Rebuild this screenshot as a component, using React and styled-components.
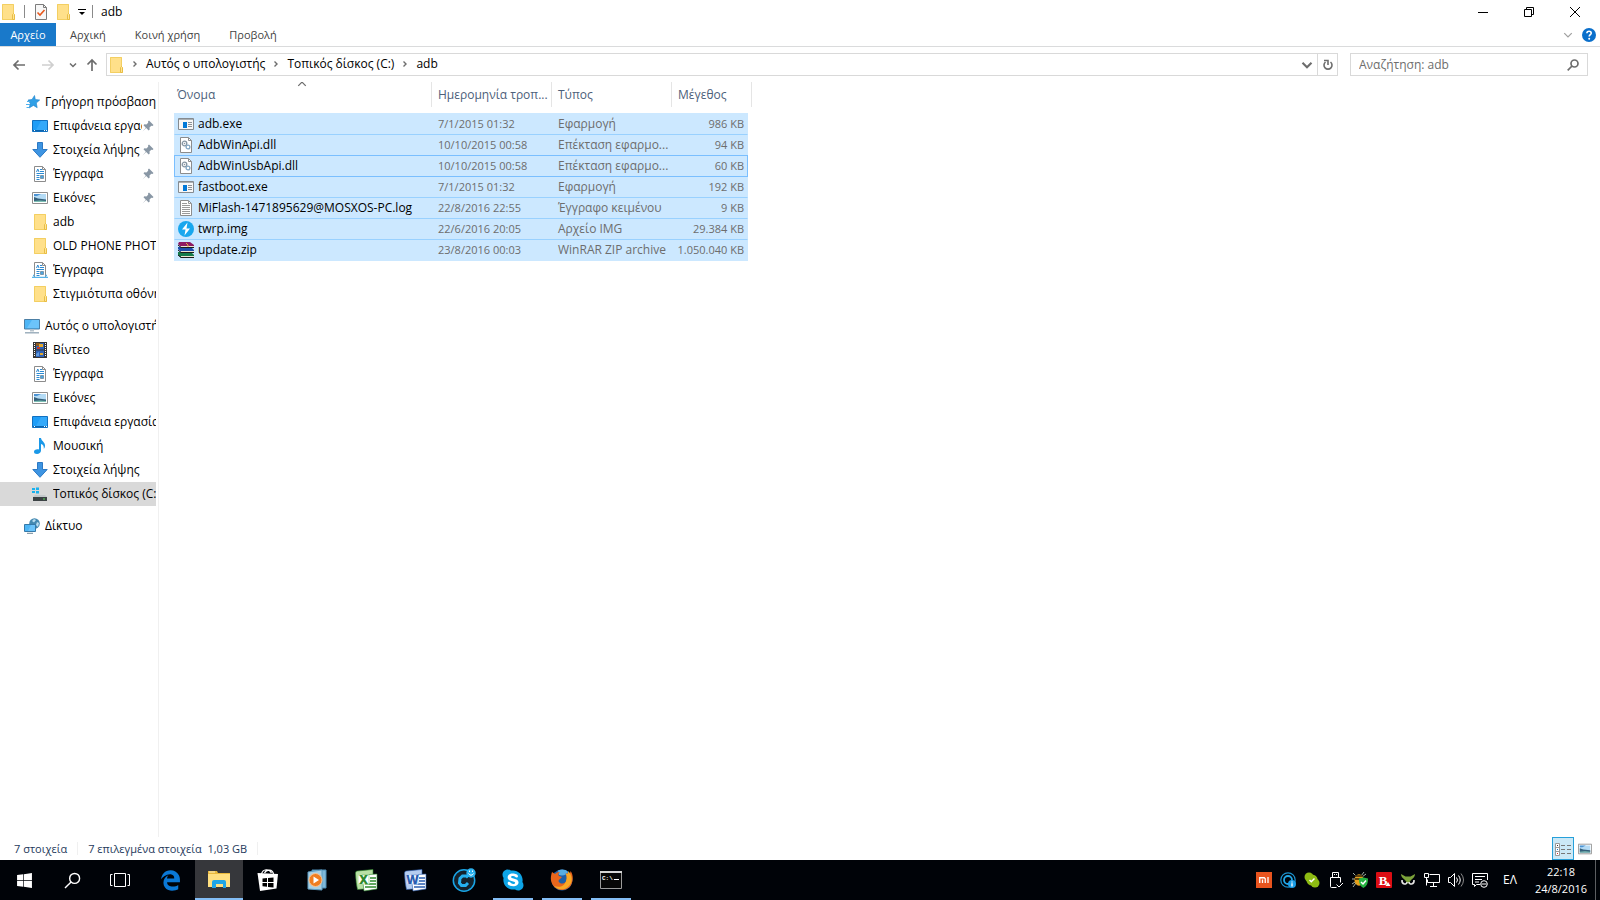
import React from "react";
import styled, { createGlobalStyle, css } from "styled-components";
import { FaEdgeLegacy, FaSkype, FaWindows } from "react-icons/fa";

const GlobalStyle = createGlobalStyle`
  * {
    box-sizing: border-box;
  }
  body {
    margin: 0;
    background: #fff;
    color: #000;
    font-family: "Open Sans", "Noto Sans", sans-serif;
    font-size: 12px;
    line-height: 16px;
  }
  button, input {
    font: inherit;
    color: inherit;
    border: 0;
    padding: 0;
    background: none;
  }
  a {
    color: inherit;
    text-decoration: none;
  }
  svg {
    display: block;
    flex: none;
  }
`;

/* ---------- icons ---------- */

const Icon = ({ size = 16, box = 16, children }) => (
  <svg width={size} height={size} viewBox={`0 0 ${box} ${box}`} fill="none" aria-hidden="true">
    {children}
  </svg>
);

const FolderIcon = () => (
  <Icon>
    <path d="M2 0h12v10l1 1v5H2z" fill="#ffe08a" />
    <path d="M2.500.5h11v15h-11z" stroke="#f3cf62" />
    <path d="M12.500 10.500l1-1 1 1v5h-2z" fill="#ffe596" stroke="#e8bd45" />
  </Icon>
);

const StarIcon = () => (
  <Icon>
    <path d="M10.500 1.500l.8 4 4.400.5-3.400 3 .9 4.700-3.800-2.300-4.200 2.600 1.100-4.500L4 6l4-.5z" fill="#2f9fe6" stroke="#1f82cb" strokeWidth=".6" />
    <path d="M3 7.500h3M2 10.500h4M2.500 13.500h3" stroke="#4fb0ec" />
  </Icon>
);

const DesktopIcon = () => (
  <Icon>
    <path d="M.5 2.500h15v11H.5z" fill="#1e9df7" stroke="#1170c0" />
    <path d="M9 3h6v9L4 12z" fill="#34a9fa" />
    <path d="M1 12.500h14" stroke="#0b64ae" />
    <path d="M2 12.500h1M12 12.500h1M14 12.500h1" stroke="#fff" />
  </Icon>
);

const DownloadIcon = () => (
  <Icon>
    <path d="M5.500.5h5v7h4.700L8 15.300.8 7.500h4.700z" fill="#3d94e2" stroke="#2c79c4" />
  </Icon>
);

const DocumentsIcon = ({ library }) => (
  <Icon>
    <path d="M2.500.5h8l3 3v12h-11z" fill="#fff" stroke="#8c8c8c" />
    <path d="M10.500.5v3h3" stroke="#8c8c8c" />
    <path d="M4.500 6l1.300-3L7 6M8 3.500h2M8 5.500h4M4.500 7.500H12M4.500 9.500h3M4.500 11.500h3M4.500 13.500h3" stroke="#2c8ad2" />
    <path d="M8.500 9.500h3v3h-3z" fill="#4aa3df" stroke="#7a98ad" />
    {library && <path d="M0 15.500h16M1 13.500h1.500M13.500 13.500H15" stroke="#57b4ea" strokeWidth="1.500" />}
  </Icon>
);

const PicturesIcon = ({ size = 16 }) => (
  <Icon size={size}>
    <path d="M.5 2.500h15v11H.5z" fill="#fff" stroke="#8f8f8f" />
    <path d="M2 4h12v8H2z" fill="#b4dbf5" />
    <path d="M2 4h7L5 6H2z" fill="#4c93d4" />
    <path d="M2 7l4 1.500 8 1V12H2z" fill="#35607b" />
    <path d="M2 11l6-.5 6 .5v1H2z" fill="#7ec0b4" />
  </Icon>
);

const PinIcon = () => (
  <Icon size={12} box={12}>
    <path d="M7 .5L11.500 5l-1 1-1.200-.2L7.500 7.600l.2 2-1 .9-2.500-2.400L.5 11.500l3.300-3.800L1.500 5.300l.9-1 2 .2 1.800-1.800L6 1.500z" fill="#8997a5" />
  </Icon>
);

const MonitorIcon = () => (
  <Icon>
    <path d="M.5 1.500h15v9.500H.5z" fill="#4db5f5" stroke="#4c7fa5" />
    <path d="M8 2h7v8L3 10z" fill="#6cc4fa" />
    <path d="M6 11.500h4v2H6z" fill="#b8c4cd" />
    <path d="M1 14.800h14" stroke="#8fa4b4" strokeWidth="1.300" />
  </Icon>
);

const VideoIcon = () => (
  <Icon>
    <path d="M1 0h14v16H1z" fill="#353535" />
    <path d="M2.500 1v14M13.500 1v14" stroke="#fff" strokeDasharray="1 1" />
    <path d="M4 1h8v6.500H4zM4 8.500h8V15H4z" fill="#2d62b8" />
    <path d="M4 1h4v3H4z" fill="#8e5a20" />
    <path d="M7 2h4v3H7zM8 11h3v2H8z" fill="#e4a82b" />
    <path d="M5 5h3v2H5z" fill="#c0392b" />
    <path d="M4 12l3-2v4H4z" fill="#5f9be0" />
  </Icon>
);

const MusicIcon = () => (
  <Icon>
    <path d="M7 0h2c.3 3 4 4 4 7.500 0 1.500-.5 2.500-1.200 3.300.4-2.800-.9-4.300-2.800-4.800v6.500C9 14.500 7 16 5 16s-3-1-3-2.300C2 12 4 11 7 11.500z" fill="#1a98e8" />
  </Icon>
);

const DriveIcon = () => (
  <Icon>
    <path d="M0 2h3v2H0zM4 1.500h3V4H4zM0 5h3v2H0zM4 5h3v2.500H4z" fill="#19b1ee" />
    <path d="M3 9h10l2 2H1z" fill="#c3c8cb" />
    <path d="M1 11h14v4H1z" fill="#3c4245" />
    <path d="M11 13h2" stroke="#59dc5b" />
  </Icon>
);

const NetworkIcon = () => (
  <Icon>
    <circle cx="10.500" cy="5.500" r="5.300" fill="#4489b0" />
    <path d="M8 3l2-2 2 1-2 2.500zM13 4l2 1-1 4-2-2z" fill="#b8dcef" />
    <path d="M.5 6.500h11v7H.5z" fill="#4db5f5" stroke="#3679a8" />
    <path d="M7 7h4v6H4z" fill="#6cc4fa" />
    <path d="M3 15.300h6" stroke="#6f8798" />
  </Icon>
);

const ExeIcon = () => (
  <Icon>
    <path d="M.5 2.500h15v11H.5z" fill="#f7f7f7" stroke="#858b90" />
    <path d="M1 3.500h14" stroke="#a9afb3" />
    <path d="M5 6h4v6H5z" fill="#0078d7" />
    <path d="M10 6.500h4M10 8.500h4M10 10.500h4" stroke="#8b9196" />
  </Icon>
);

const DllIcon = () => (
  <Icon>
    <path d="M2.500.5h8l3 3v12h-11z" fill="#fff" stroke="#8c8c8c" />
    <path d="M10.500.5v3h3" stroke="#8c8c8c" />
    <circle cx="6.500" cy="6.500" r="2.300" stroke="#8796a3" strokeWidth="1.300" />
    <circle cx="6.500" cy="6.500" r=".8" fill="#8796a3" />
    <circle cx="10" cy="10" r="1.900" stroke="#85a8c4" strokeWidth="1.300" />
  </Icon>
);

const LogIcon = () => (
  <Icon>
    <path d="M2.500.5h8l3 3v12h-11z" fill="#fff" stroke="#8c8c8c" />
    <path d="M10.500.5v3h3M4 3.500h5M4 5.500h8M4 7.500h8M4 9.500h8M4 11.500h8M4 13.500h8" stroke="#9a9a9a" />
  </Icon>
);

const BoltIcon = () => (
  <Icon>
    <circle cx="8" cy="8" r="8" fill="#19a7ee" />
    <path d="M9.500 1.500L4 8.500h3.500L6.500 14.500l5.500-7H8.500z" fill="#fff" />
  </Icon>
);

const RarIcon = () => (
  <Icon>
    <path d="M1 0h11l4 3v2H3L0 2z" fill="#8e1a62" />
    <path d="M0 5h13l3 3v2H3L0 7z" fill="#1d4fae" />
    <path d="M0 10h13l3 3v3H3l-3-3z" fill="#127a4a" />
    <path d="M3 4.500h13M3 9.500h13M3 14.500h13" stroke="#e9e3d2" />
    <path d="M0 3l3 2.500h13M0 8l3 2.500h13M0 13l3 2.500h13" stroke="#1b1b1b" />
    <path d="M8 1l2 2v2" stroke="#e0b040" />
  </Icon>
);

const PropertiesIcon = () => (
  <Icon>
    <path d="M2.500.5h8l3 3v12h-11z" fill="#f7f7f7" stroke="#7c7c7c" />
    <path d="M10.500.5v3h3" stroke="#7c7c7c" />
    <path d="M4.500 8.500L7 11l4.500-5" stroke="#e8581c" strokeWidth="1.600" />
  </Icon>
);

const ArrowIcon = ({ turn = 0 }) => (
  <Icon>
    <path
      d="M14 8H3M7.500 3.500L3 8l4.500 4.500"
      stroke="currentColor"
      strokeWidth="1.700"
      transform={`rotate(${turn} 8 8)`}
    />
  </Icon>
);

const ChevronIcon = ({ size = 8, turn = 0, weight = 1 }) => (
  <Icon size={size} box={8}>
    <path d="M1 2.500l3 3 3-3" stroke="currentColor" strokeWidth={weight} transform={`rotate(${turn} 4 4)`} />
  </Icon>
);

const CrumbArrow = () => (
  <Icon size={8} box={8}>
    <path d="M2.500 1.500L5 4 2.500 6.500" stroke="currentColor" strokeWidth="1.400" />
  </Icon>
);

const RefreshIcon = () => (
  <Icon size={12} box={12}>
    <path d="M3.500 3a4 4 0 1 0 5 0" stroke="currentColor" strokeWidth="1.600" />
    <path d="M2 1.500h4V6" stroke="currentColor" strokeWidth="1.600" />
  </Icon>
);

const LensIcon = ({ size = 12, weight = 2 }) => (
  <Icon size={size} box={12}>
    <circle cx="7.500" cy="4.500" r="3.500" stroke="currentColor" strokeWidth={weight} />
    <path d="M5 7L.7 11.300" stroke="currentColor" strokeWidth={weight} />
  </Icon>
);

const HelpIcon = () => (
  <Icon size={14} box={14}>
    <circle cx="7" cy="7" r="7" fill="#0a6fcb" />
    <path d="M4.900 5.200c0-2.700 4.300-2.600 4.300 0 0 1.500-2 1.600-2 3.400" stroke="#fff" strokeWidth="1.600" />
    <circle cx="7.200" cy="10.800" r="1" fill="#fff" />
  </Icon>
);

const DetailsIcon = () => (
  <Icon>
    <path d="M.5 2.500h4v12h-4zM.5 6.500h4M.5 10.500h4" fill="#fff" stroke="#9a9a9a" />
    <path d="M2 4.500h1" stroke="#333" />
    <path d="M2 8.500h1" stroke="#1979ca" />
    <path d="M2 12.500h1" stroke="#d03030" />
    <path d="M6 4.500h4M12 4.500h4M6 8.500h4M12 8.500h4M6 12.500h4M12 12.500h4" stroke="#777" />
  </Icon>
);

const MinimizeIcon = () => (
  <Icon size={10} box={10}>
    <path d="M0 5.500h10" stroke="#000" />
  </Icon>
);

const RestoreIcon = () => (
  <Icon size={10} box={10}>
    <path d="M.5 2.500h7v7h-7zM2.500 2.500v-2h7v7h-2" stroke="#000" />
  </Icon>
);

const CloseIcon = () => (
  <Icon size={10} box={10}>
    <path d="M0 0l10 10M10 0L0 10" stroke="#000" />
  </Icon>
);

/* taskbar drawings */

const TaskViewIcon = () => (
  <Icon size={20} box={20}>
    <path d="M4.500 3.500h11v13h-11zM2.500 4.500h-2v11h2M17.500 4.500h2v11h-2" stroke="#fff" />
  </Icon>
);

const ExplorerIcon = () => (
  <Icon size={24} box={24}>
    <path d="M1 3h9l1 2h12v14H1z" fill="#e9b83c" />
    <path d="M2 4h6" stroke="#fff3c4" />
    <path d="M1 6h22v13H1z" fill="#ffdf80" />
    <path d="M5 20v-6q0-2 2-2h10q2 0 2 2v6h-3v-4H9v4z" fill="#1fa5e6" />
  </Icon>
);

const StoreIcon = () => (
  <Icon size={24} box={24}>
    <path d="M5.500 6C7 .5 13 .5 15.500 5M8.500 5c2-4 8-4 9 1" stroke="#fff" strokeWidth="1.200" />
    <path d="M1.500 5L22 6l-1.500 14.500L4 23z" fill="#fff" />
    <path d="M6.500 10.500l4.500-.5V14H6.500zM12 9.900l5.500-.5V14H12zM6.500 15H11v3.800l-4.500-.5zM12 15h5.500v4.500l-5.500-.6z" fill="#000" />
  </Icon>
);

const PlayerIcon = () => (
  <Icon size={24} box={24}>
    <path d="M7 2h14v18H7z" fill="#7fb8d9" stroke="#4c8db5" />
    <path d="M3 4l14-2v20L3 21z" fill="#a8cfe4" stroke="#5d9cc2" />
    <circle cx="10.500" cy="12" r="6.500" fill="#f07d20" stroke="#f9c493" />
    <path d="M8.500 8.500l5.500 3.500-5.500 3.500z" fill="#fff" />
  </Icon>
);

const OfficeIcon = ({ letter, color, light }) => (
  <Icon size={24} box={24}>
    <path d="M1.500 5q0-2 2-2L19 1.500v15l-3 4-12.500 1q-1.500-6-2-16.500z" fill={light} stroke={color} strokeWidth=".6" />
    <path d="M8 7l15-1v15l-13 2z" fill="#fff" stroke={color} strokeWidth=".6" />
    <path d="M16 10h6M16 13h6M11 16h11M11 19h11" stroke={color} strokeWidth="1.500" />
    <path d="M4 7h11v9H4z" fill="#fff" stroke={light} />
    <text x="9.500" y="15.500" fill={color} fontSize="12" fontWeight="800" textAnchor="middle">
      {letter}
    </text>
  </Icon>
);

const CIcon = () => (
  <Icon size={24} box={24}>
    <circle cx="12" cy="12.500" r="10.700" fill="#14222c" stroke="#19a5e6" strokeWidth="1.500" />
    <path d="M16 9.500l-1.500-1.500h-4l-2.500 2.500-.5 4.500 2 2.500h4l2.500-2.500" stroke="#25b0ef" strokeWidth="3" />
    <circle cx="19" cy="5" r="4.700" fill="#2bb2ef" />
    <path d="M16.500 5.500q2.500 3.500 5 0M17.500 2.500v1.500M20.500 2.500v1.500" stroke="#fff" />
  </Icon>
);

const FirefoxIcon = () => (
  <Icon size={24} box={24}>
    <circle cx="12" cy="12" r="10.500" fill="#1d5fa8" />
    <path d="M8 2.500C11 .8 16 1 18 4c-1 3-5 4-9 3z" fill="#57aee3" />
    <path d="M2 4l3 2c2-2 4-2 5-2-2 1.500-2 3-1 4l3 1-2 2c-2 1-2 3 0 4 3 1.500 6 0 6.500-3 1-2 0-5-1-7 4 2 5 0 5-2 3 4 3 10 0 15-4 5-12 5-16 1S0 10 2 4z" fill="#e8661c" />
    <path d="M18 3c5 5 5 12 0 16-4 3.500-10 3-14-1 4 1.500 8 1 10.500-2 2.500-3.500 2.500-7 1.500-10 1.500.5 2.500-1 2-3z" fill="#f9a825" />
  </Icon>
);

const ConsoleIcon = () => (
  <Icon size={24} box={24}>
    <path d="M1.500 3.500h21v17h-21z" fill="#070707" stroke="#9b9b9b" />
    <path d="M1 4h22" stroke="#d5d5d5" strokeWidth="2" />
    <text x="3" y="12" fill="#fff" fontSize="6" fontFamily="Liberation Mono, monospace" fontWeight="700">
      C:\.
    </text>
    <path d="M15 11.500h5" stroke="#fff" />
  </Icon>
);

const MiIcon = () => (
  <Icon>
    <path d="M0 0h16v16H0z" fill="#e8541e" />
    <path d="M3.750 11V5.750h4.500L9.250 6.750V11M6.500 7.500V11M12 5v6" stroke="#fff" strokeWidth="1.300" />
  </Icon>
);

const SyncIcon = () => (
  <Icon>
    <circle cx="8" cy="8" r="7.200" stroke="#1b93cf" strokeWidth="1.200" />
    <circle cx="8" cy="8" r="4" stroke="#22a6e5" strokeWidth="1.800" />
    <circle cx="12" cy="12" r="4" fill="#1a9de6" />
    <path d="M12 9.500v1M12 11.300v3.200" stroke="#fff" strokeWidth="1.300" />
  </Icon>
);

const ContactIcon = () => (
  <Icon>
    <circle cx="5" cy="5" r="4.500" fill="#8dbb13" />
    <circle cx="11" cy="11" r="4.500" fill="#8dbb13" />
    <circle cx="8" cy="8" r="5.600" fill="#8dbb13" />
    <path d="M5.500 8l1.800 1.800L10.500 6.500" stroke="#fff" strokeWidth="1.400" />
  </Icon>
);

const UsbIcon = () => (
  <Icon>
    <path d="M4.500.5h6v5h-6zM2.500 5.500h10v5M2.500 5.500v9q0 1 1 1h5" stroke="#fff" />
    <path d="M6 2.500h1M8 2.500h1" stroke="#fff" />
    <path d="M8.500 12.500l2.500 2.500 4-4" stroke="#fff" />
  </Icon>
);

const BugIcon = () => (
  <Icon>
    <path d="M1 1l3 3M12 0L9 4M0 7h3M0 12l3-2M14 2l-4 3M1 15l3-4" stroke="#a4b3a6" />
    <ellipse cx="7" cy="8" rx="4.500" ry="5.800" fill="#e6a01c" />
    <path d="M3 4h8M3 7h7" stroke="#332508" strokeWidth="1.500" />
    <path d="M7 6.500l4.500-1 4.500 1c0 5-1 7-4.500 9.500-3.500-2-4.500-4.500-4.500-9.500z" fill="#25b342" />
    <path d="M9 10l2 2 3-3.500" stroke="#fff" strokeWidth="1.500" />
  </Icon>
);

const ShieldIcon = () => (
  <Icon>
    <rect width="16" height="16" rx="1" fill="#dc0d13" />
    <text x="7" y="12.500" fill="#fff" fontSize="13" fontWeight="700" fontFamily="Liberation Serif, serif" textAnchor="middle">
      B
    </text>
    <path d="M9.500 14l2.500-4 2.500 4z" fill="#fff" />
  </Icon>
);

const OwlIcon = () => (
  <Icon>
    <path d="M1 2l4.500 2.500h5L15 2c0 3-2 4.500-4 6l-3 4-3-4C3 6.500 1 5 1 2z" fill="#7ba33a" />
    <path d="M2 8c-.5 5 5 5 5 2M14 8c.5 5-5 5-5 2" stroke="#e4e4e4" strokeWidth="1.600" />
  </Icon>
);

const LanIcon = () => (
  <Icon>
    <path d="M5.500 2.500h10v8h-12v-3M9.500 10.500v4M6 14.500h7" stroke="#fff" />
    <path d="M.5 1.500h4v4h-4zM2.500 5.500v8" stroke="#fff" />
  </Icon>
);

const VolumeIcon = () => (
  <Icon>
    <path d="M.5 5.500h2l4-4v13l-4-4h-2z" stroke="#fff" />
    <path d="M8.500 5.500q2 2.500 0 5M10.500 3.500q3.500 4.500 0 9" stroke="#fff" />
    <path d="M13 1.500q5 6.500 0 13" stroke="#8a8a8a" />
  </Icon>
);

const ActionIcon = () => (
  <Icon>
    <path d="M8 12.500H4.500L2.500 14.500v-2h-2v-11h15V8M3 4.500h10M3 7.500h7M3 10h4" stroke="#fff" />
    <circle cx="12" cy="12" r="3.300" stroke="#fff" />
    <path d="M9.500 12h5" stroke="#fff" />
  </Icon>
);

/* ---------- layout ---------- */

const Screen = styled.div`
  display: flex;
  flex-direction: column;
  height: 100vh;
`;

const TitleBar = styled.header`
  display: flex;
  align-items: center;
  height: 23px;
  padding-right: 2px;
`;

const QuickAccess = styled.div`
  display: flex;
  align-items: center;
  gap: 6px;
`;

const IconButton = styled.button`
  display: flex;
  align-items: center;
  justify-content: center;
  width: ${(props) => props.$width || 16}px;
  height: 20px;
  color: ${(props) => props.$color || "#6d6d6d"};
`;

const Divider = styled.span`
  width: 1px;
  height: 13px;
  margin: 0 ${(props) => props.$gap || 0}px;
  background: ${(props) => props.$color || "#8a8a8a"};
`;

const WindowTitle = styled.h1`
  flex: 1;
  margin: 0;
  padding-left: 8px;
  font-size: 12px;
  font-weight: 400;
`;

const Ribbon = styled.div`
  display: flex;
  align-items: center;
  height: 24px;
  padding-right: 4px;
  border-bottom: 1px solid #dadbdc;
  font-size: 11px;
`;

const RibbonTab = styled.button`
  height: 23px;
  padding: 0 15px 0 14px;
  color: #444;
  ${(props) =>
    props.$file &&
    css`
      width: 56px;
      padding: 0;
      background: #1979ca;
      color: #fff;
    `}
`;

const Spacer = styled.div`
  flex: 1;
`;

const AddressRow = styled.div`
  display: flex;
  align-items: center;
  padding: 6px 12px 6px 11px;
  color: #6d6d6d;
`;

const NavButtons = styled.div`
  display: flex;
  align-items: center;
  width: 95px;
`;

const AddressBox = styled.nav`
  display: flex;
  flex: 1;
  align-items: center;
  height: 23px;
  padding-left: 1px;
  border: 1px solid #d9d9d9;
`;

const Crumb = styled.button`
  display: flex;
  align-items: center;
  padding-bottom: 1px;
  color: #000;
`;

const CrumbGap = styled.span`
  display: flex;
  justify-content: center;
  width: 22px;
  color: #6d6d6d;
`;

const RefreshButton = styled(IconButton)`
  width: 20px;
  height: 21px;
  border-left: 1px solid #d9d9d9;
`;

const SearchBox = styled.label`
  display: flex;
  align-items: center;
  width: 238px;
  height: 23px;
  margin-left: 12px;
  padding: 0 8px;
  border: 1px solid #d9d9d9;
`;

const SearchInput = styled.input`
  flex: 1;
  min-width: 0;
  outline: 0;
  &::placeholder {
    color: #6d6d6d;
    opacity: 1;
  }
`;

const Content = styled.div`
  display: flex;
  flex: 1;
  min-height: 0;
`;

const Sidebar = styled.nav`
  width: 159px;
  padding: 8px 2px 0 0;
  border-right: 1px solid #f0f0f0;
`;

const TreeGroup = styled.ul`
  margin: 0 0 8px;
  padding: 0;
  list-style: none;
`;

const TreeLink = styled.a`
  display: flex;
  align-items: center;
  height: 24px;
  padding-left: ${(props) => (props.$root ? 24 : 32)}px;
  padding-right: ${(props) => (props.$pinned ? 2 : 0)}px;
  background: ${(props) => (props.$current ? "#d9d9d9" : "none")};
`;

const TreeLabel = styled.span`
  flex: 1;
  margin-left: 5px;
  overflow: hidden;
  white-space: nowrap;
`;

const FilePane = styled.main`
  flex: 1;
  padding-left: 15px;
  overflow: auto;
`;

const FileTable = styled.table`
  width: 578px;
  table-layout: fixed;
  border-collapse: separate;
  border-spacing: 0;
`;

const HeadCell = styled.th`
  position: relative;
  height: 25px;
  padding: 0 0 0 ${(props) => (props.$first ? 3 : 6)}px;
  border-right: 1px solid #e5e5e5;
  color: #4c607a;
  font-weight: 400;
  text-align: left;
`;

const SortButton = styled.button`
  display: block;
  width: 100%;
  text-align: left;
  white-space: nowrap;
`;

const SortMark = styled.span`
  position: absolute;
  top: -3px;
  left: 50%;
  margin-left: -6px;
  color: #6d6d6d;
`;

const TableGap = styled.tr`
  height: 6px;
`;

const FileRow = styled.tr`
  height: 21px;
  &:first-child {
    height: 22px;
  }
  ${(props) =>
    props.$focused &&
    css`
      && td {
        border-color: #7abfff;
        box-shadow: 0 -1px 0 #7abfff;
      }
    `}
`;

const Cell = styled.td`
  padding: 0 0 0 6px;
  border-bottom: 1px solid #99d1ff;
  background: #cce8ff;
  color: #6d6d6d;
  font-size: ${(props) => (props.$numeric ? 11 : 12)}px;
  text-align: ${(props) => (props.$right ? "right" : "left")};
  white-space: nowrap;
  &:first-child {
    padding-left: 3px;
    border-left: 1px solid #cce8ff;
    color: #000;
  }
  &:last-child {
    padding: 0 3px 0 0;
    border-right: 1px solid #cce8ff;
  }
  tr:last-child > & {
    border-bottom-color: #cce8ff;
  }
`;

const FileName = styled.span`
  display: flex;
  align-items: center;
  gap: 4px;
`;

const StatusBar = styled.footer`
  display: flex;
  align-items: center;
  height: 23px;
  padding: 0 4px 0 14px;
  color: #1e395b;
  font-size: 11px;
`;

const ViewButton = styled(IconButton)`
  width: 22px;
  height: 23px;
  ${(props) =>
    props.$active &&
    css`
      border: 1px solid #26a0da;
      background: #cbe8f6;
    `}
`;

const Taskbar = styled.div`
  display: flex;
  height: 40px;
  background: #000308;
  color: #fff;
`;

const TaskButton = styled.button`
  display: flex;
  align-items: center;
  justify-content: center;
  width: 48px;
  color: ${(props) => props.$color || "#fff"};
  background-color: ${(props) => (props.$active ? "#36373b" : "transparent")};
  ${(props) =>
    (props.$active || props.$running) &&
    css`
      background-image: linear-gradient(#83bdf5, #83bdf5);
      background-position: bottom center;
      background-repeat: no-repeat;
      background-size: ${props.$active ? 48 : 40}px 2px;
    `}
`;

const Apps = styled.div`
  display: flex;
  flex: 1;
  gap: 1px;
  padding-left: 2px;
`;

const SkypeMark = styled.span`
  display: flex;
  color: #0da4e6;
  background: radial-gradient(circle, #fff 8px, transparent 9px);
`;

const Tray = styled.div`
  display: flex;
  align-items: center;
  gap: 8px;
`;

const Language = styled.button`
  width: 28px;
  margin-left: 8px;
`;

const Clock = styled.button`
  width: 71px;
  padding-left: 3px;
  font-size: 11px;
  line-height: 17px;
`;

const ShowDesktop = styled.button`
  width: 5px;
  border-left: 1px solid #5c5e61;
`;

const tree = [
  {
    root: ["Γρήγορη πρόσβαση", StarIcon],
    items: [
      { name: "Επιφάνεια εργασίας", icon: DesktopIcon, pinned: true },
      { name: "Στοιχεία λήψης", icon: DownloadIcon, pinned: true },
      { name: "Έγγραφα", icon: DocumentsIcon, pinned: true },
      { name: "Εικόνες", icon: PicturesIcon, pinned: true },
      { name: "adb", icon: FolderIcon },
      { name: "OLD PHONE PHOTOS", icon: FolderIcon },
      { name: "Έγγραφα", icon: DocumentsIcon, library: true },
      { name: "Στιγμιότυπα οθόνης", icon: FolderIcon },
    ],
  },
  {
    root: ["Αυτός ο υπολογιστής", MonitorIcon],
    items: [
      { name: "Βίντεο", icon: VideoIcon },
      { name: "Έγγραφα", icon: DocumentsIcon },
      { name: "Εικόνες", icon: PicturesIcon },
      { name: "Επιφάνεια εργασίας", icon: DesktopIcon },
      { name: "Μουσική", icon: MusicIcon },
      { name: "Στοιχεία λήψης", icon: DownloadIcon },
      { name: "Τοπικός δίσκος (C:)", icon: DriveIcon, current: true },
    ],
  },
  { root: ["Δίκτυο", NetworkIcon], items: [] },
];

const files = [
  ["adb.exe", "7/1/2015 01:32", "Εφαρμογή", "986 KB", ExeIcon],
  ["AdbWinApi.dll", "10/10/2015 00:58", "Επέκταση εφαρμο...", "94 KB", DllIcon],
  ["AdbWinUsbApi.dll", "10/10/2015 00:58", "Επέκταση εφαρμο...", "60 KB", DllIcon],
  ["fastboot.exe", "7/1/2015 01:32", "Εφαρμογή", "192 KB", ExeIcon],
  ["MiFlash-1471895629@MOSXOS-PC.log", "22/8/2016 22:55", "Έγγραφο κειμένου", "9 KB", LogIcon],
  ["twrp.img", "22/6/2016 20:05", "Αρχείο IMG", "29.384 KB", BoltIcon],
  ["update.zip", "23/8/2016 00:03", "WinRAR ZIP archive", "1.050.040 KB", RarIcon],
];

const crumbs = ["Αυτός ο υπολογιστής", "Τοπικός δίσκος (C:)", "adb"];

const trayIcons = [
  ["Mi PC Suite", MiIcon],
  ["Sync", SyncIcon],
  ["Contacts", ContactIcon],
  ["USB", UsbIcon],
  ["Antimalware", BugIcon],
  ["Antivirus", ShieldIcon],
  ["Owl", OwlIcon],
  ["Network", LanIcon],
  ["Volume", VolumeIcon],
  ["Notifications", ActionIcon],
];

const App = () => {
  return (
    <Screen>
      <GlobalStyle />
      <TitleBar>
        <QuickAccess>
          <FolderIcon />
          <Divider $gap={2} />
          <IconButton aria-label="Ιδιότητες">
            <PropertiesIcon />
          </IconButton>
          <IconButton aria-label="Νέος φάκελος">
            <FolderIcon />
          </IconButton>
          <IconButton aria-label="Προσαρμογή" $width={9}>
            <Icon size={8} box={8}>
              <path d="M0 1.500h8" stroke="#000" />
              <path d="M1 4h6L4 7z" fill="#000" />
            </Icon>
          </IconButton>
          <Divider />
        </QuickAccess>
        <WindowTitle>adb</WindowTitle>
        <IconButton aria-label="Ελαχιστοποίηση" $width={46}>
          <MinimizeIcon />
        </IconButton>
        <IconButton aria-label="Επαναφορά" $width={46}>
          <RestoreIcon />
        </IconButton>
        <IconButton aria-label="Κλείσιμο" $width={46}>
          <CloseIcon />
        </IconButton>
      </TitleBar>

      <Ribbon>
        <RibbonTab $file>Αρχείο</RibbonTab>
        <RibbonTab>Αρχική</RibbonTab>
        <RibbonTab>Κοινή χρήση</RibbonTab>
        <RibbonTab>Προβολή</RibbonTab>
        <Spacer />
        <IconButton aria-label="Ανάπτυξη κορδέλας" $width={28} $color="#a0a0a0">
          <ChevronIcon size={10} />
        </IconButton>
        <IconButton aria-label="Βοήθεια" $width={14}>
          <HelpIcon />
        </IconButton>
      </Ribbon>

      <AddressRow>
        <NavButtons>
          <IconButton aria-label="Πίσω">
            <ArrowIcon />
          </IconButton>
          <IconButton aria-label="Εμπρός" $width={42} $color="#cfcfcf">
            <ArrowIcon turn={180} />
          </IconButton>
          <IconButton aria-label="Πρόσφατα" $width={8}>
            <ChevronIcon weight={1.500} />
          </IconButton>
          <IconButton aria-label="Επάνω" $width={29}>
            <ArrowIcon turn={90} />
          </IconButton>
        </NavButtons>
        <AddressBox>
          <FolderIcon />
          {crumbs.map((name) => (
            <Crumb key={name}>
              <CrumbGap>
                <CrumbArrow />
              </CrumbGap>
              {name}
            </Crumb>
          ))}
          <Spacer />
          <IconButton aria-label="Προηγούμενες θέσεις" $width={20}>
            <ChevronIcon size={12} weight={1.400} />
          </IconButton>
          <RefreshButton aria-label="Ανανέωση">
            <RefreshIcon />
          </RefreshButton>
        </AddressBox>
        <SearchBox>
          <SearchInput type="text" placeholder="Αναζήτηση: adb" aria-label="Αναζήτηση: adb" />
          <LensIcon weight={1.700} />
        </SearchBox>
      </AddressRow>

      <Content>
        <Sidebar>
          {tree.map(({ root: [title, RootIcon], items }) => (
            <TreeGroup key={title}>
              <li>
                <TreeLink href="#" $root>
                  <RootIcon />
                  <TreeLabel>{title}</TreeLabel>
                </TreeLink>
              </li>
              {items.map(({ name, icon: ItemIcon, pinned, current, library }, i) => (
                <li key={i}>
                  <TreeLink href="#" $pinned={pinned} $current={current}>
                    <ItemIcon library={library} />
                    <TreeLabel>{name}</TreeLabel>
                    {pinned && <PinIcon />}
                  </TreeLink>
                </li>
              ))}
            </TreeGroup>
          ))}
        </Sidebar>

        <FilePane>
          <FileTable>
            <colgroup>
              <col width="258" />
              <col width="120" />
              <col width="120" />
              <col width="76" />
              <col width="4" />
            </colgroup>
            <thead>
              <tr>
                <HeadCell $first>
                  <SortButton>Όνομα</SortButton>
                  <SortMark>
                    <ChevronIcon size={10} turn={180} />
                  </SortMark>
                </HeadCell>
                <HeadCell>
                  <SortButton>Ημερομηνία τροπ...</SortButton>
                </HeadCell>
                <HeadCell>
                  <SortButton>Τύπος</SortButton>
                </HeadCell>
                <HeadCell colSpan={2}>
                  <SortButton>Μέγεθος</SortButton>
                </HeadCell>
              </tr>
              <TableGap />
            </thead>
            <tbody>
              {files.map(([name, date, type, size, TypeIcon], i) => (
                <FileRow key={name} $focused={i === 2}>
                  <Cell>
                    <FileName>
                      <TypeIcon />
                      {name}
                    </FileName>
                  </Cell>
                  <Cell $numeric>{date}</Cell>
                  <Cell>{type}</Cell>
                  <Cell $numeric $right>
                    {size}
                  </Cell>
                </FileRow>
              ))}
            </tbody>
          </FileTable>
        </FilePane>
      </Content>

      <StatusBar>
        <span>7 στοιχεία</span>
        <Divider $gap={10} $color="#f0f0f0" />
        <span>7 επιλεγμένα στοιχεία&nbsp; 1,03 GB</span>
        <Divider $gap={10} $color="#f0f0f0" />
        <Spacer />
        <ViewButton aria-label="Λεπτομέρειες" $active>
          <DetailsIcon />
        </ViewButton>
        <ViewButton aria-label="Μεγάλα εικονίδια">
          <PicturesIcon size={14} />
        </ViewButton>
      </StatusBar>

      <Taskbar>
        <TaskButton aria-label="Έναρξη">
          <FaWindows size={17} />
        </TaskButton>
        <TaskButton aria-label="Αναζήτηση">
          <LensIcon size={17} weight={1} />
        </TaskButton>
        <TaskButton aria-label="Προβολή εργασιών">
          <TaskViewIcon />
        </TaskButton>
        <Apps>
          <TaskButton aria-label="Edge" $color="#0a78d6">
            <FaEdgeLegacy size={21} />
          </TaskButton>
          <TaskButton aria-label="Εξερεύνηση αρχείων" $active>
            <ExplorerIcon />
          </TaskButton>
          <TaskButton aria-label="Store">
            <StoreIcon />
          </TaskButton>
          <TaskButton aria-label="Media Player">
            <PlayerIcon />
          </TaskButton>
          <TaskButton aria-label="Excel">
            <OfficeIcon letter="X" color="#2f8a2e" light="#b9e0a5" />
          </TaskButton>
          <TaskButton aria-label="Word">
            <OfficeIcon letter="W" color="#2a5db0" light="#b5cdf0" />
          </TaskButton>
          <TaskButton aria-label="Chat">
            <CIcon />
          </TaskButton>
          <TaskButton aria-label="Skype" $running>
            <SkypeMark>
              <FaSkype size={24} />
            </SkypeMark>
          </TaskButton>
          <TaskButton aria-label="Firefox" $running>
            <FirefoxIcon />
          </TaskButton>
          <TaskButton aria-label="Γραμμή εντολών" $running>
            <ConsoleIcon />
          </TaskButton>
        </Apps>
        <Tray>
          {trayIcons.map(([label, TrayIcon]) => (
            <IconButton key={label} aria-label={label}>
              <TrayIcon />
            </IconButton>
          ))}
        </Tray>
        <Language>ΕΛ</Language>
        <Clock>
          22:18
          <br />
          24/8/2016
        </Clock>
        <ShowDesktop aria-label="Εμφάνιση επιφάνειας εργασίας" />
      </Taskbar>
    </Screen>
  );
};

export default App;
